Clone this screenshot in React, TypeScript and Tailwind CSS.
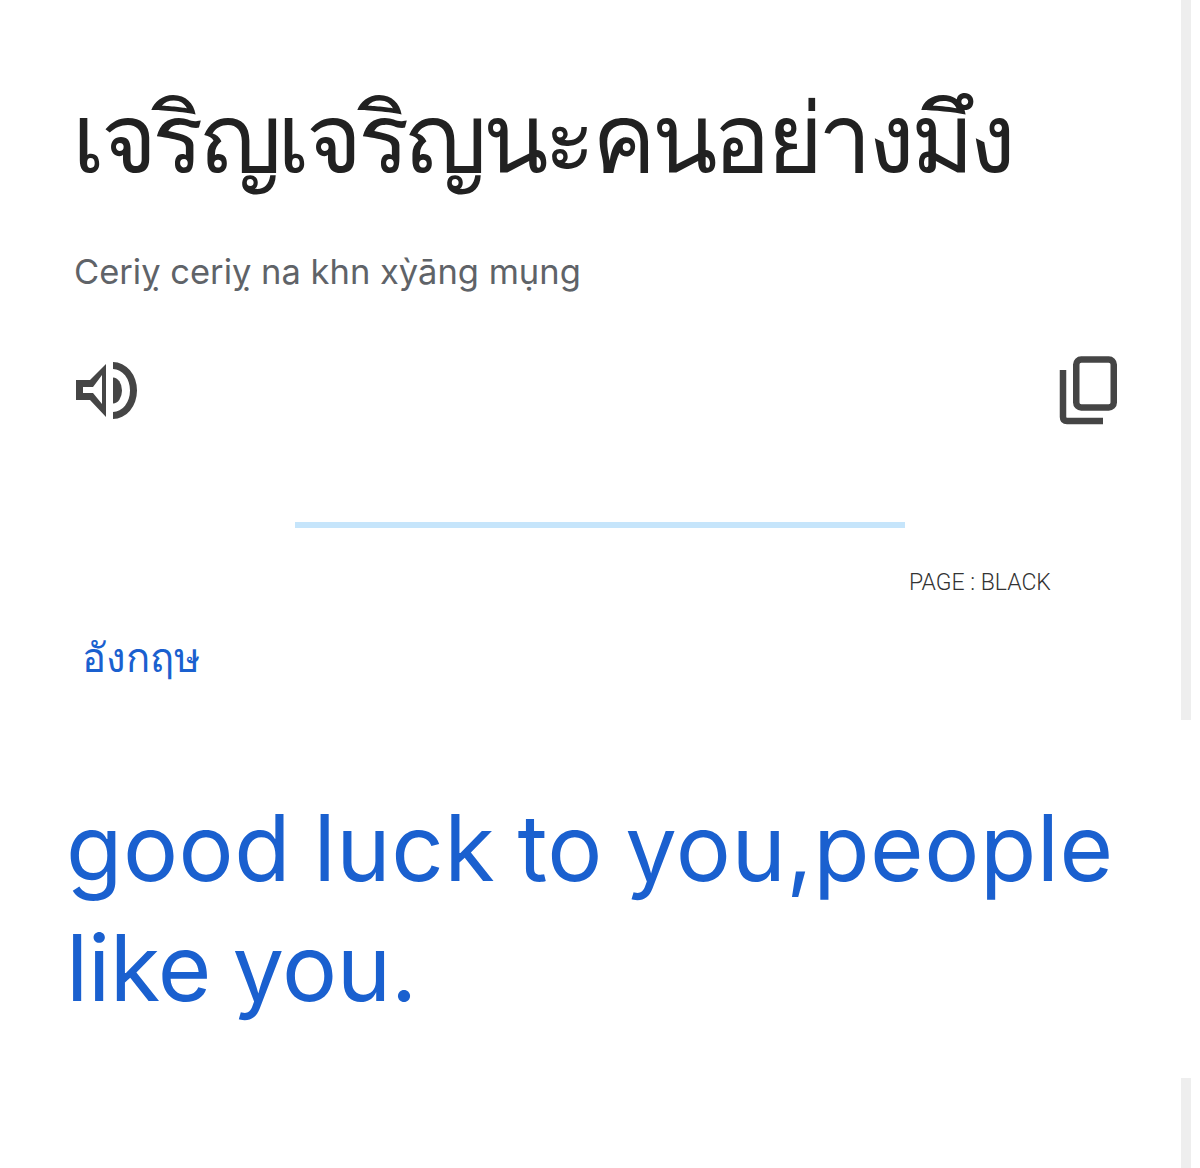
import React from "react";

const sansFont = "font-['Inter','Noto_Sans','Liberation_Sans',sans-serif]";

const SpeakerIcon = () => (
  <svg width="64" height="66" viewBox="0 -2 64 66" className="text-[#454545]">
    <path d="M1 22H15L31 6V59L15 42H1Z M8 29V35H18L27 46V17L18 29Z" fill="currentColor" fillRule="evenodd" />
    <path d="M38 4A24 28.500 0 0 1 38 61V54A17 21.500 0 0 0 38 11Z" fill="currentColor" />
    <path d="M38 19.500A9 13 0 0 1 38 45.500Z" fill="currentColor" />
  </svg>
);

const CopyIcon = () => (
  <svg width="60" height="70" viewBox="0 0 60 70" fill="none" stroke="#454545" strokeWidth="6.500">
    <rect x="17.250" y="3.500" width="37.500" height="48" rx="5" />
    <path d="M4 14V61Q4 65 8 65H44" />
  </svg>
);

export default function App() {
  return (
    <div className={`flex h-[1168px] w-[1200px] overflow-hidden bg-white ${sansFont}`}>
      <main className="w-[1181px] shrink-0">
        <section className="h-[720px] pl-[75px] pr-[62px]">
          <h1 className="-ml-[3px] pt-[87px] text-[96px] leading-[100px] tracking-[-4.400px] text-[#212121] whitespace-nowrap">
            เจริญเจริญนะคนอย่างมึง
          </h1>
          <p className="mt-[63px] -ml-px text-[34.500px] leading-[44px] text-[#5f6368] whitespace-nowrap">
            Ceriỵ ceriỵ na khn xỳāng mụng
          </p>
          <div className="mt-[62px] flex items-start justify-between">
            <SpeakerIcon />
            <CopyIcon />
          </div>
          <div className="ml-[220px] mt-[96px] h-[6px] w-[610px] bg-[#c6e5fb]" />
          <p className="ml-[834px] mt-[39px] font-['Roboto'] text-[23px] font-light leading-[32px] text-[#333] whitespace-nowrap">
            PAGE : BLACK
          </p>
          <p className="ml-[7px] mt-[37px] text-[40px] leading-[44px] text-[#1a60cf] whitespace-nowrap">
            อังกฤษ
          </p>
        </section>
        <section className="pl-[66px] pt-[68px]">
          <p className="text-[92px] leading-[120px] text-[#1a60cf] [word-spacing:-4px] whitespace-nowrap">
            <span className="block tracking-[0.500px]">good luck to you,people</span>
            <span className="block tracking-[-0.400px]">like you.</span>
          </p>
        </section>
      </main>
      <aside className="flex w-[19px] flex-col justify-between">
        <div className="h-[720px] w-[10px] bg-[#eeeeee]" />
        <div className="h-[90px] w-[10px] bg-[#eeeeee]" />
      </aside>
    </div>
  );
}
